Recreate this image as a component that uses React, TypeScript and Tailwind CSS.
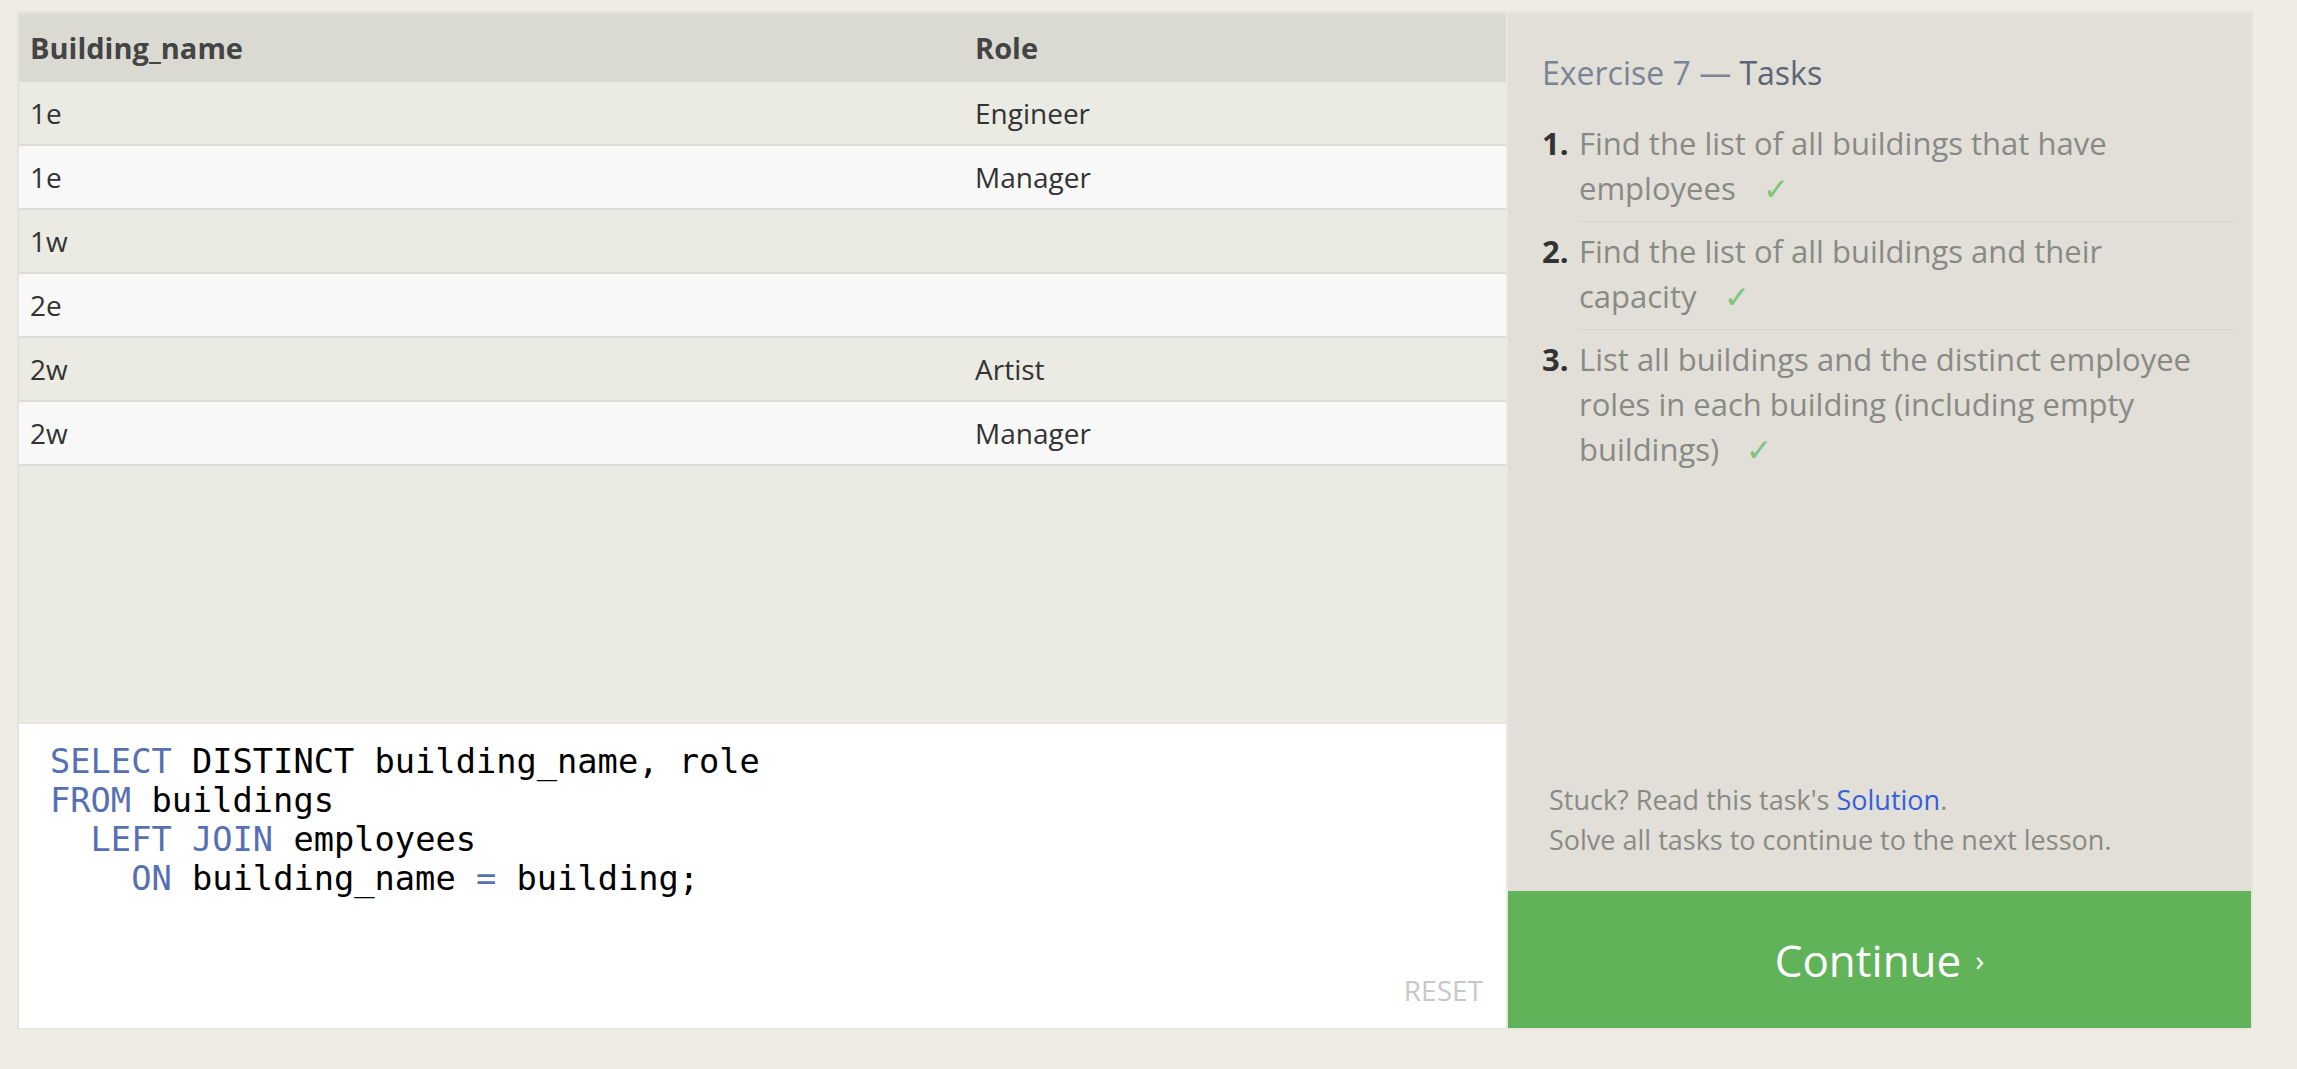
import React from 'react';

const rows: [string, string][] = [
  ['1e', 'Engineer'],
  ['1e', 'Manager'],
  ['1w', ''],
  ['2e', ''],
  ['2w', 'Artist'],
  ['2w', 'Manager'],
];

const tasks = [
  'Find the list of all buildings that have employees',
  'Find the list of all buildings and their capacity',
  'List all buildings and the distinct employee roles in each building (including empty buildings)',
];

const Kw: React.FC<{ children: React.ReactNode }> = ({ children }) => (
  <span className="text-[#5670b3]">{children}</span>
);

const App: React.FC = () => {
  return (
    <div className="min-h-screen bg-[#efece5] pt-[11px] pl-[17px] font-['Open_Sans',sans-serif]">
      <div className="flex w-[2236px] h-[1018px] border-t-[3px] border-l-2 border-r-2 border-b border-[#e4e3dc]">
        {/* left: results + editor */}
        <div className="flex flex-col w-[1487px] bg-[#ebeae3]">
          <div className="flex h-[68px] bg-[#dadad2] text-[29px] font-bold text-[#444] items-center">
            <div className="w-[945px] pl-[11px]">Building_name</div>
            <div className="flex-1 pl-[11px]">Role</div>
          </div>
          {rows.map(([b, r], i) => (
            <div
              key={i}
              className={
                'flex h-[64px] items-center border-b-2 border-[#dedcd6] text-[28px] text-[#333] ' +
                (i % 2 === 0 ? 'bg-[#ebeae3]' : 'bg-[#f8f8f8]')
              }
            >
              <div className="w-[945px] pl-[11px]">{b}</div>
              <div className="flex-1 pl-[11px]">{r}</div>
            </div>
          ))}
          <div className="flex-1" />
          <div className="flex flex-col h-[305px] bg-white border-t border-[#e2e1da]">
            <pre className="pt-[18px] pl-[31px] font-['DejaVu_Sans_Mono',monospace] text-[33.7px] leading-[39px] text-black">
              <Kw>SELECT</Kw> DISTINCT building_name, role{'\n'}
              <Kw>FROM</Kw> buildings{'\n'}
              {'  '}<Kw>LEFT</Kw> <Kw>JOIN</Kw> employees{'\n'}
              {'    '}<Kw>ON</Kw> building_name <Kw>=</Kw> building;
            </pre>
            <div className="flex flex-1 items-end justify-end pr-[23px] pb-[24px]">
              <span className="text-[28px] text-[#c8c8c8] leading-none">RESET</span>
            </div>
          </div>
        </div>

        <div className="w-[2px] bg-[#e8e7e0]" />

        {/* right: tasks */}
        <div className="flex flex-col flex-1">
          <div className="flex flex-col flex-1 bg-[#e1dfd8] pt-[36px] pl-[34px] pr-[17px]">
            <h2 className="text-[32px] leading-[45px] text-[#7b8494]">
              Exercise 7 — <span className="text-[#5d6575]">Tasks</span>
            </h2>
            <ol className="mt-[26px]">
              {tasks.map((t, i) => (
                <li key={i} className="flex text-[31px] leading-[45px]">
                  <span className="w-[37px] shrink-0 font-bold text-[#333]">{i + 1}.</span>
                  <div
                    className={
                      'flex-1 text-[#8a8a85] pb-[10px] mb-[7px] ' +
                      (i < tasks.length - 1 ? 'border-b border-[#d4d2c8]' : '')
                    }
                  >
                    {t}
                    <span className="ml-[27px] text-[#80c57e]">✓</span>
                  </div>
                </li>
              ))}
            </ol>
            <div className="mt-auto pl-[7px] pb-[31px] text-[27px] leading-[40px] text-[#8a8a85]">
              <p>
                Stuck? Read this task's <a className="text-[#3461d9]">Solution</a>.
              </p>
              <p>Solve all tasks to continue to the next lesson.</p>
            </div>
          </div>
          <button className="h-[137px] bg-[#61b35a] text-white text-[44px] flex items-center justify-center">
            Continue <span className="ml-[14px] text-[30px]">›</span>
          </button>
        </div>
      </div>
    </div>
  );
};

export default App;
